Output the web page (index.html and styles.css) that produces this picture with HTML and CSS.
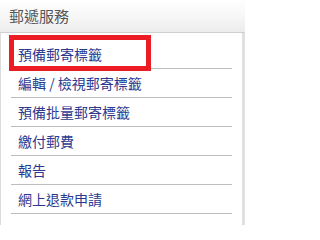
FILE: index.html
```html
<!DOCTYPE html>
<html lang="zh-Hant">
<head>
<meta charset="utf-8">
<title>郵遞服務</title>
<link rel="stylesheet" href="styles.css">
</head>
<body>
<div class="panel">
  <div class="panel-head">郵遞服務</div>
  <ul class="menu">
    <li class="menu-item is-marked"><a href="#">預備郵寄標籤</a><span class="mark"></span></li>
    <li class="menu-item"><a href="#">編輯 / 檢視郵寄標籤</a></li>
    <li class="menu-item"><a href="#">預備批量郵寄標籤</a></li>
    <li class="menu-item"><a href="#">繳付郵費</a></li>
    <li class="menu-item"><a href="#">報告</a></li>
    <li class="menu-item"><a href="#">網上退款申請</a></li>
  </ul>
</div>
</body>
</html>
```

FILE: styles.css
```css
html, body {
  margin: 0;
  padding: 0;
  background: #fff;
}
body {
  font-family: "Noto Sans CJK TC", "Noto Sans", "Liberation Sans", sans-serif;
}
.panel {
  width: 245px;
}
.panel-head {
  height: 32px;
  line-height: 32px;
  padding-left: 9px;
  font-size: 15px;
  color: #555;
  background: linear-gradient(to bottom, #ffffff 0%, #f7f7f7 50%, #ececec 100%);
  border-bottom: 1px solid #cfcfcf;
}
.menu {
  list-style: none;
  margin: 0;
  padding: 7px 0 11px 0;
  border-left: 1px solid #dcdcdc;
  border-right: 3px solid #e0e0e0;
}
.menu-item {
  position: relative;
  margin: 0 10px 0 10px;
  height: 28px;
  line-height: 28px;
  border-bottom: 1px solid #bdbdbd;
  padding-left: 7px;
  font-size: 14px;
}
.menu-item a {
  color: #2b3a8f;
  text-decoration: none;
}
.mark {
  position: absolute;
  left: -2px;
  top: -5px;
  width: 132px;
  height: 26px;
  border: 5px solid #ec1c24;
}
```
